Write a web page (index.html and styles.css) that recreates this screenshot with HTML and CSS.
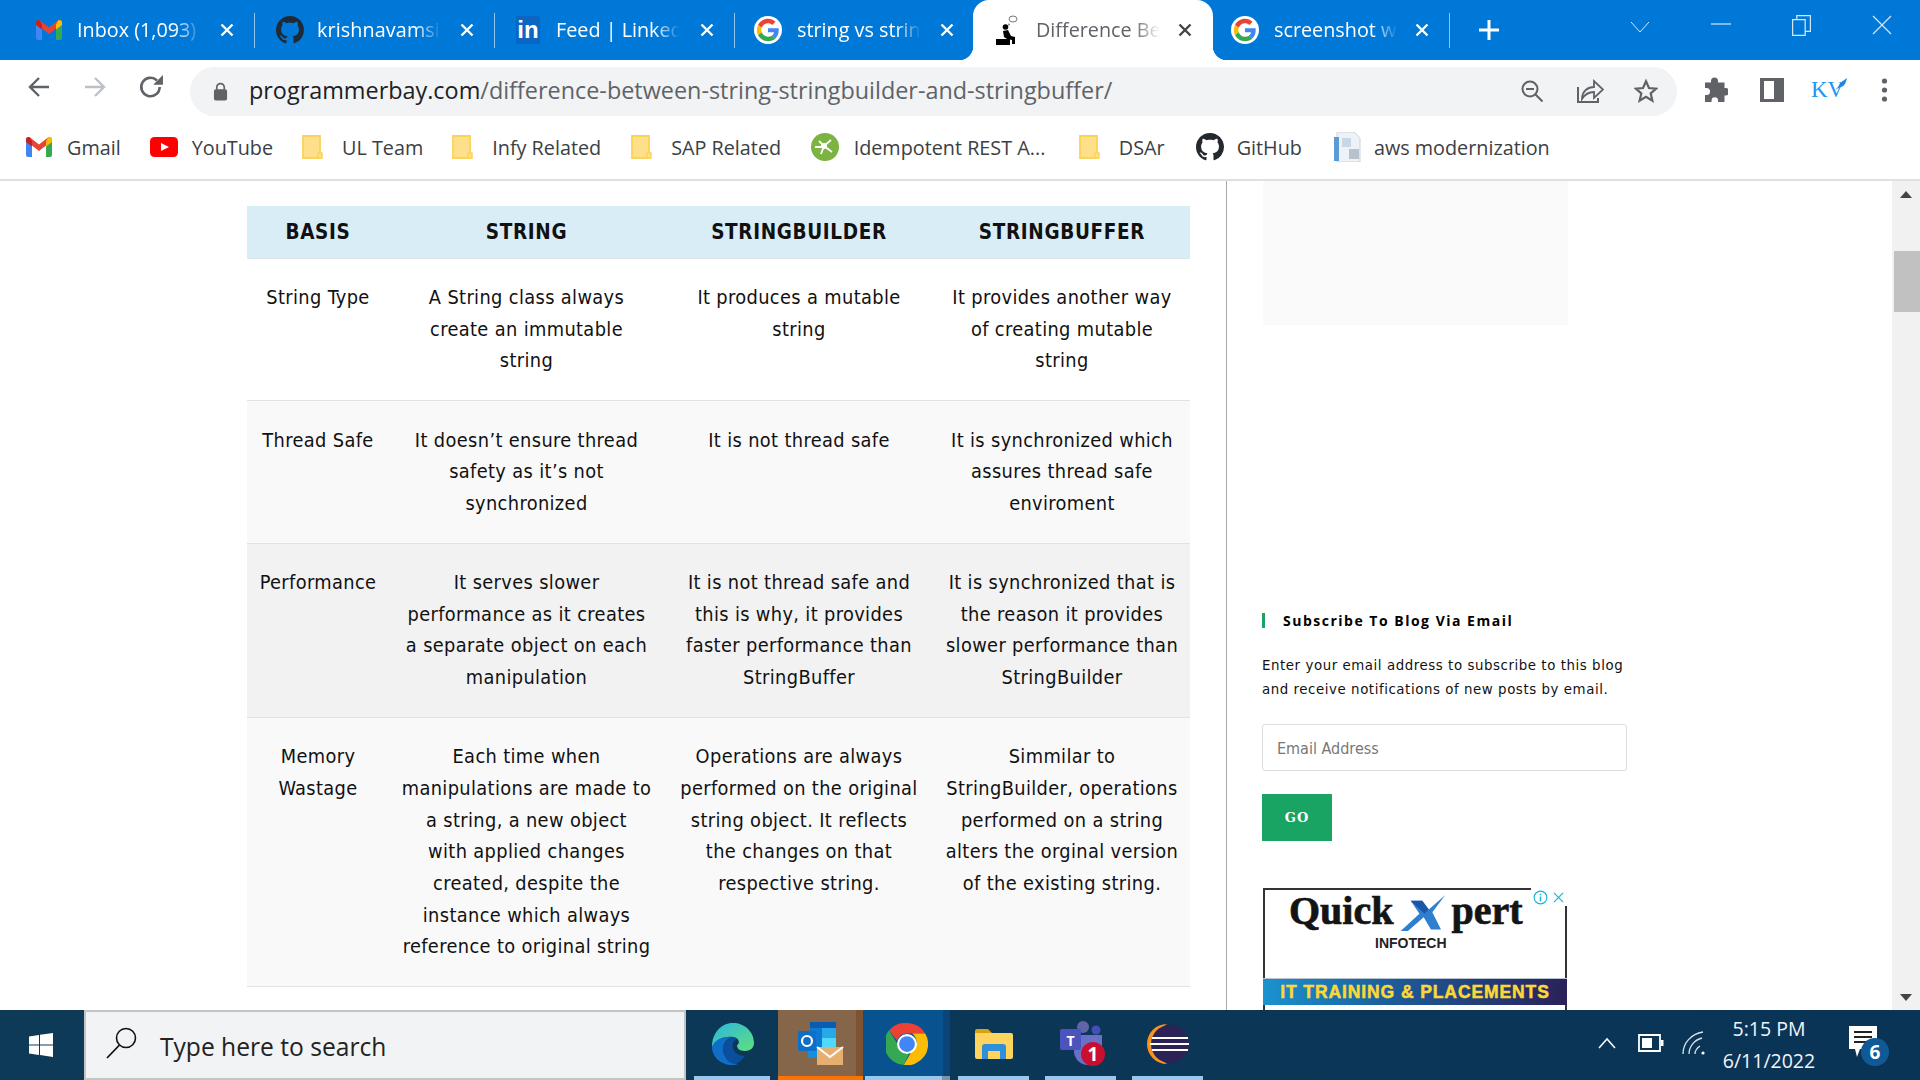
FILE: index.html
```html
<!DOCTYPE html>
<html lang="en">
<head>
<meta charset="utf-8">
<title>Difference Between String, StringBuilder and StringBuffer</title>
<link rel="stylesheet" href="styles.css">
</head>
<body>
<svg class="sprite" xmlns="http://www.w3.org/2000/svg">
  <symbol id="gmail" viewBox="0 0 26 20">
    <path fill="#4285f4" d="M0 3v15a2 2 0 0 0 2 2h4V8z"/>
    <path fill="#34a853" d="M20 8v12h4a2 2 0 0 0 2-2V3z"/>
    <path fill="#ea4335" d="M0 2.500C0 .4 2.400-.7 4 .6l9 7 9-7c1.600-1.300 4-.2 4 1.900V4l-6 4.600-7 5.400-7-5.400L0 4z"/>
    <path fill="#c5221f" d="M0 2.500V5l6 4.600V4.600L4 .6C2.400-.7 0 .4 0 2.500z"/>
    <path fill="#fbbc04" d="M26 2.500V5l-6 4.600V4.600l2-4c1.600-1.300 4-.2 4 1.900z"/>
  </symbol>
  <symbol id="github" viewBox="0 0 16 16">
    <path d="M8 0C3.58 0 0 3.58 0 8c0 3.54 2.29 6.53 5.47 7.59.4.07.55-.17.55-.38 0-.19-.01-.82-.01-1.49-2.01.37-2.53-.49-2.69-.94-.09-.23-.48-.94-.82-1.13-.28-.15-.68-.52-.01-.53.63-.01 1.08.58 1.23.82.72 1.21 1.87.87 2.33.66.07-.52.28-.87.51-1.07-1.78-.2-3.64-.89-3.64-3.95 0-.87.31-1.59.82-2.15-.08-.2-.36-1.02.08-2.12 0 0 .67-.21 2.2.82.64-.18 1.32-.27 2-.27.68 0 1.36.09 2 .27 1.53-1.04 2.2-.82 2.2-.82.44 1.1.16 1.92.08 2.12.51.56.82 1.27.82 2.15 0 3.07-1.87 3.75-3.65 3.95.29.25.54.73.54 1.48 0 1.07-.01 1.93-.01 2.2 0 .21.15.46.55.38A8.013 8.013 0 0 0 16 8c0-4.420-3.58-8-8-8z"/>
  </symbol>
  <symbol id="google" viewBox="-6 -6 60 60">
    <circle cx="24" cy="24" r="30" fill="#fff"/>
    <path fill="#EA4335" d="M24 9.500c3.540 0 6.710 1.220 9.210 3.600l6.850-6.850C35.900 2.380 30.470 0 24 0 14.620 0 6.510 5.380 2.560 13.220l7.980 6.190C12.430 13.720 17.740 9.500 24 9.500z"/>
    <path fill="#4285F4" d="M46.980 24.550c0-1.570-.15-3.090-.38-4.550H24v9.020h12.940c-.58 2.960-2.260 5.480-4.780 7.180l7.730 6c4.510-4.180 7.090-10.360 7.090-17.650z"/>
    <path fill="#FBBC05" d="M10.530 28.590c-.48-1.450-.76-2.990-.76-4.590s.27-3.140.76-4.590l-7.980-6.190C.92 16.460 0 20.120 0 24c0 3.880.92 7.540 2.560 10.780l7.970-6.190z"/>
    <path fill="#34A853" d="M24 48c6.480 0 11.930-2.130 15.890-5.810l-7.730-6c-2.150 1.450-4.920 2.300-8.160 2.300-6.260 0-11.570-4.220-13.470-9.910l-7.980 6.190C6.510 42.620 14.620 48 24 48z"/>
  </symbol>
  <symbol id="close" viewBox="0 0 14 14">
    <path d="M1.500 1.500l11 11M12.500 1.500l-11 11" fill="none" stroke="currentColor" stroke-width="2.400"/>
  </symbol>
  <symbol id="folder" viewBox="0 0 21 24">
    <path fill="#fee08b" stroke="#fbd35a" stroke-width="1.800" d="M1 1h17v22H1z"/>
    <path fill="#fee08b" stroke="#fbd35a" stroke-width="1.500" d="M16 18h4v5h-4z"/>
  </symbol>
</svg>

<header class="tabstrip">
  <div class="tab">
    <svg class="fav fav-gmail"><use href="#gmail"/></svg>
    <span class="tab-title">Inbox (1,093)</span>
    <svg class="tab-x"><use href="#close"/></svg>
  </div>
  <div class="tab tab-two">
    <svg class="fav fav-gh"><use href="#github"/></svg>
    <span class="tab-title">krishnavamsi1</span>
    <svg class="tab-x"><use href="#close"/></svg>
  </div>
  <div class="tab tab-three">
    <span class="fav fav-in">in</span>
    <span class="tab-title">Feed | LinkedI</span>
    <svg class="tab-x"><use href="#close"/></svg>
  </div>
  <div class="tab tab-last">
    <svg class="fav fav-g"><use href="#google"/></svg>
    <span class="tab-title">string vs string</span>
    <svg class="tab-x"><use href="#close"/></svg>
  </div>
  <div class="tab tab-active">
    <svg class="fav fav-person" viewBox="0 0 26 30">
      <ellipse cx="18" cy="4" rx="4" ry="3" fill="#fff" stroke="#777" stroke-width="1"/>
      <circle cx="14" cy="9.500" r=".9" fill="#777"/>
      <circle cx="10.500" cy="12" r="2.800" fill="#000"/>
      <path d="M8 16l5-1 3 6 4 1v7h-3v-4l-5-1-3-2z" fill="#000"/>
      <path d="M1 24h14v6H1z" fill="#000"/>
    </svg>
    <span class="tab-title">Difference Bet</span>
    <svg class="tab-x"><use href="#close"/></svg>
  </div>
  <div class="tab tab-six">
    <svg class="fav fav-g"><use href="#google"/></svg>
    <span class="tab-title">screenshot wi</span>
    <svg class="tab-x"><use href="#close"/></svg>
  </div>
  <svg class="plus" viewBox="0 0 22 22"><path d="M11 1v20M1 11h20" stroke="#fff" stroke-width="3" fill="none"/></svg>
  <div class="win-controls">
    <svg class="win win-chev" viewBox="0 0 20 12"><path d="M1 1l9 10 9-10" fill="none" stroke="#d5e6f7" stroke-width="1"/></svg>
    <svg class="win win-min" viewBox="0 0 20 2"><path d="M0 1h20" stroke="#d5e6f7" stroke-width="1.200"/></svg>
    <svg class="win win-res" viewBox="0 0 18 20"><path d="M.5 4.500h12v15H.5zM4.500 4.500v-4h13v15h-5" fill="none" stroke="#d5e6f7" stroke-width="1.200"/></svg>
    <svg class="win win-cls" viewBox="0 0 20 20"><path d="M1 1l18 18M19 1L1 19" fill="none" stroke="#d5e6f7" stroke-width="1.200"/></svg>
  </div>
</header>

<nav class="toolbar">
  <svg class="tool tool-back" viewBox="0 0 24 24"><path d="M22 12H3M12 3l-9 9 9 9" fill="none" stroke="#5f6368" stroke-width="2.400"/></svg>
  <svg class="tool tool-fwd" viewBox="0 0 24 24"><path d="M2 12h19M12 3l9 9-9 9" fill="none" stroke="#bdc1c6" stroke-width="2.400"/></svg>
  <svg class="tool tool-reload" viewBox="0 0 24 24"><path d="M20 12a8.500 8.500 0 1 1-2.500-6" fill="none" stroke="#5f6368" stroke-width="2.400"/><path d="M23 1v9h-9z" fill="#5f6368"/></svg>
  <div class="omnibox">
    <svg class="lock" viewBox="0 0 16 20"><path d="M4 8V5.500a4 4 0 0 1 8 0V8" fill="none" stroke="#5f6368" stroke-width="1.800"/><rect x="1" y="7.500" width="14" height="12" rx="2" fill="#5f6368"/></svg>
    <div class="url"><span class="url-host">programmerbay.com</span>/difference-between-string-stringbuilder-and-stringbuffer/</div>
    <svg class="omni-ico" viewBox="0 0 24 24"><circle cx="10" cy="10" r="7.500" fill="none" stroke="#5f6368" stroke-width="2"/><path d="M6 10h8M15.500 15.500l7 7" stroke="#5f6368" stroke-width="2" fill="none"/></svg>
    <svg class="omni-ico" viewBox="0 0 28 26"><path d="M2 9v15h20v-4" fill="none" stroke="#5f6368" stroke-width="2"/><path d="M6 21c0-8 6-12 12-12V3l9 8.500-9 8.500v-6c-5 0-9 2-12 7z" fill="none" stroke="#5f6368" stroke-width="1.800"/></svg>
    <svg class="omni-ico" viewBox="0 0 26 26"><path d="M13 2.500l3.200 7.300 7.800.7-5.900 5.200 1.800 7.800-6.900-4.100-6.900 4.100 1.800-7.800L2 10.500l7.800-.7z" fill="none" stroke="#5f6368" stroke-width="2.400"/></svg>
  </div>
  <svg class="tool tool-puzzle" viewBox="0 0 26 26"><path d="M9 4a3.500 3.500 0 0 1 7 0v1.500h6.500V11H24a3.800 3.800 0 0 1 0 7.500h-1.500V25H16v-1.500a3.200 3.200 0 0 0-6.400 0V25H3v-7h1.500a3.500 3.500 0 0 0 0-7H3V5.500h6z" fill="#5f6368"/></svg>
  <svg class="tool tool-side" viewBox="0 0 24 24"><path d="M0 0h24v24H0z" fill="#5f6368"/><path d="M4 3h10v18H4z" fill="#fff"/></svg>
  <div class="kv">KV<svg class="kv-bird" viewBox="0 0 14 14"><path d="M1 13c3-2 4-5 5-7 2-2 5-3 7-5-1 4-2 8-6 9-2 .5-4 2-6 3z" fill="#1e88e5"/></svg></div>
  <svg class="tool tool-dots" viewBox="0 0 6 24"><circle cx="3" cy="3" r="2.600" fill="#5f6368"/><circle cx="3" cy="12" r="2.600" fill="#5f6368"/><circle cx="3" cy="21" r="2.600" fill="#5f6368"/></svg>
</nav>

<nav class="bookmarks">
  <div class="bm bm-gmail"><svg class="bm-ic bm-ic-gmail"><use href="#gmail"/></svg>Gmail</div>
  <div class="bm bm-yt"><svg class="bm-ic bm-ic-yt" viewBox="0 0 28 20"><rect width="28" height="20" rx="4.500" fill="#f00"/><path d="M11 6l8 4-8 4z" fill="#fff"/></svg>YouTube</div>
  <div class="bm bm-ul"><svg class="bm-ic bm-ic-fold"><use href="#folder"/></svg>UL Team</div>
  <div class="bm bm-infy"><svg class="bm-ic bm-ic-fold"><use href="#folder"/></svg>Infy Related</div>
  <div class="bm bm-sap"><svg class="bm-ic bm-ic-fold"><use href="#folder"/></svg>SAP Related</div>
  <div class="bm bm-rest"><svg class="bm-ic bm-ic-rest" viewBox="0 0 28 28"><circle cx="14" cy="14" r="14" fill="#7cb342"/><path d="M8 8l5 5 7-6M13 13l-3 8M13 13l8 6M4 14h9" stroke="#fff" stroke-width="1.800" fill="none"/><circle cx="13" cy="13" r="3" fill="#fff"/></svg>Idempotent REST A...</div>
  <div class="bm bm-dsar"><svg class="bm-ic bm-ic-fold"><use href="#folder"/></svg>DSAr</div>
  <div class="bm bm-gh"><svg class="bm-ic bm-ic-gh"><use href="#github"/></svg>GitHub</div>
  <div class="bm bm-aws"><svg class="bm-ic bm-ic-aws" viewBox="0 0 27 30"><path d="M3 0h17l6 6v24H3z" fill="#eef1f5" stroke="#cdd3da"/><path d="M0 5h5v24H0z" fill="#5b9bd5"/><path d="M8 6h9v9H8z" fill="#c7d6e8"/><path d="M15 17h10v10H15z" fill="#b8c2cc"/></svg>aws modernization</div>
</nav>

<main class="page">
  <article class="article">
    <table class="cmp">
      <colgroup><col class="c1"><col class="c2"><col class="c3"><col class="c4"></colgroup>
      <thead>
        <tr><th>BASIS</th><th>STRING</th><th>STRINGBUILDER</th><th>STRINGBUFFER</th></tr>
      </thead>
      <tbody>
        <tr><td>String Type</td><td>A String class always<br>create an immutable<br>string</td><td>It produces a mutable string</td><td>It provides another way of creating mutable string</td></tr>
        <tr class="r-light"><td>Thread Safe</td><td>It doesn’t ensure thread safety as it’s not synchronized</td><td>It is not thread safe</td><td>It is synchronized which assures thread safe enviroment</td></tr>
        <tr class="r-dark"><td>Performance</td><td>It serves slower performance as it creates a separate object on each manipulation</td><td>It is not thread safe and this is why, it provides faster performance than StringBuffer</td><td>It is synchronized that is the reason it provides slower performance than StringBuilder</td></tr>
        <tr class="r-light"><td>Memory Wastage</td><td>Each time when<br>manipulations are made to<br>a string, a new object<br>with applied changes<br>created, despite the<br>instance which always<br>reference to original string</td><td>Operations are always performed on the original string object. It reflects the changes on that respective string.</td><td>Simmilar to StringBuilder, operations performed on a string alters the orginal version of the existing string.</td></tr>
      </tbody>
    </table>
  </article>
  <aside class="sidebar">
    <div class="ad-blank"></div>
    <h4 class="widget-title">Subscribe To Blog Via Email</h4>
    <p class="widget-text">Enter your email address to subscribe to this blog and receive notifications of new posts by email.</p>
    <div class="email-box">Email Address</div>
    <div class="go-btn">GO</div>
    <div class="ad">
      <div class="ad-logo">
        <span>Quick</span>
        <svg class="ad-x" viewBox="0 0 62 50"><path d="M0 50L26 26 14 8h16l9 12L62 0 44 24l12 24H42L32 31 10 50z" fill="#2f7fd1"/><path d="M14 8h16l9 12-6 6z" fill="#1c56a8"/></svg>
        <span>pert</span>
      </div>
      <div class="ad-sub">INFOTECH</div>
      <div class="ad-banner">IT TRAINING &amp; PLACEMENTS</div>
      <div class="ad-choice">
        <svg class="ad-i" viewBox="0 0 16 16"><circle cx="8" cy="8" r="6.800" fill="none" stroke="#16b5d8" stroke-width="1.200"/><path d="M8 7v5M8 4v1.600" stroke="#16b5d8" stroke-width="1.600"/></svg>
        <svg class="ad-c" viewBox="0 0 12 12"><path d="M1 1l10 10M11 1L1 11" stroke="#16b5d8" stroke-width="1.300"/></svg>
      </div>
    </div>
  </aside>
  <div class="scrollbar">
    <div class="arrow-up"></div>
    <div class="thumb"></div>
    <div class="arrow-down"></div>
  </div>
</main>

<footer class="taskbar">
  <div class="start"><svg class="win-logo" viewBox="0 0 24 24"><path d="M0 3.500l10-1.500v9.400H0zM11 1.800L24 0v11.400H11zM0 12.600h10V22L0 20.500zM11 12.600h13V24l-13-1.900z" fill="#fff"/></svg></div>
  <div class="search">
    <svg class="search-ic" viewBox="0 0 32 32"><circle cx="20" cy="11" r="9.500" fill="none" stroke="#111" stroke-width="1.600"/><path d="M13.500 18L1 31" stroke="#111" stroke-width="1.800"/></svg>
    <span>Type here to search</span>
  </div>
  <div class="tile tile-edge">
    <svg class="tile-ic" viewBox="0 0 42 42">
      <defs><linearGradient id="edgeA" x1="0" y1="0" x2="1" y2="1"><stop offset="0" stop-color="#2bb6e0"/><stop offset="1" stop-color="#5fe07c"/></linearGradient></defs>
      <path d="M21 0C32 0 42 8 42 20c0 5-4 8-9 8-6 0-8-3-8-6 3-1 3-7-4-8C12 13 4 17 0 24 0 10 9 0 21 0z" fill="url(#edgeA)"/>
      <path d="M0 24c2-7 11-11 20-10-6 2-9 7-9 12 0 7 6 14 15 15-2 1-4 1-6 1C9 42 0 34 0 24z" fill="#0f6fc6"/>
      <path d="M11 26c0-5 4-10 9-12 2 0 4 1 4 3-3 1-4 4-3 8 1 5 6 8 12 8-3 4-7 8-11 8-6-1-11-8-11-15z" fill="#0b4f9c"/>
    </svg>
  </div>
  <div class="tile tile-outlook">
    <svg class="tile-ic tile-ic-ol" viewBox="0 0 46 44">
      <path d="M12 0h26v6H12z" fill="#0a5cb0"/><path d="M12 6h12v10H12z" fill="#0f78d4"/><path d="M24 6h14v10H24z" fill="#28a8ea"/><path d="M12 16h12v12H12z" fill="#0f78d4"/><path d="M24 16h14v12H24z" fill="#50d9ff"/><path d="M10 28h30v8H10z" fill="#1490df"/>
      <rect y="9" width="18" height="20" rx="1.500" fill="#0f6fc6"/><circle cx="9" cy="19" r="5" fill="none" stroke="#fff" stroke-width="2.200"/>
      <path d="M19 25h26v18H19z" fill="#e5b06f"/><path d="M19 25l13 10 13-10" fill="none" stroke="#fff" stroke-width="2"/>
    </svg>
  </div>
  <div class="tile tile-chrome">
    <svg class="tile-ic" viewBox="0 0 40 40">
      <path d="M20 0a20 20 0 0 1 17.300 10H20a10 10 0 0 0-9.500 7L3 7A20 20 0 0 1 20 0z" fill="#ea4335"/>
      <path d="M3 7l8 13a9 9 0 0 0 11 9l-5 11A20 20 0 0 1 3 7z" fill="#34a853"/>
      <path d="M37.300 10A20 20 0 0 1 17 40l8-14a10 10 0 0 0 0-16z" fill="#fbbc05"/>
      <circle cx="20" cy="20" r="9.500" fill="#fff"/><circle cx="20" cy="20" r="7.500" fill="#4285f4"/>
    </svg>
  </div>
  <div class="tile tile-files">
    <svg class="tile-ic tile-ic-files" viewBox="0 0 38 32">
      <path d="M0 3a2 2 0 0 1 2-2h11l4 4h-17z" fill="#d9a20c"/><path d="M0 5h36a2 2 0 0 1 2 2v22a2 2 0 0 1-2 2H2a2 2 0 0 1-2-2z" fill="#fcd45f"/>
      <path d="M7 31V19a3 3 0 0 1 3-3h18a3 3 0 0 1 3 3v12h-6v-8H13v8z" fill="#2f8fd8"/>
    </svg>
  </div>
  <div class="tile tile-teams">
    <svg class="tile-ic tile-ic-teams" viewBox="0 0 46 46">
      <circle cx="23" cy="6" r="6" fill="#6264a7"/><circle cx="36" cy="9" r="4.500" fill="#464eb8"/><path d="M14 14h28v16a14 14 0 0 1-28 0z" fill="#6a6fc7"/><rect y="8" width="21" height="21" rx="2" fill="#4b53bc"/>
      <text class="teams-t" x="10.500" y="24.500">T</text>
      <circle cx="33" cy="33" r="12" fill="#c8102e"/><text class="teams-n" x="33" y="40">1</text>
    </svg>
  </div>
  <div class="tile tile-eclipse">
    <svg class="tile-ic" viewBox="0 0 42 40">
      <path d="M20 0A20 20 0 0 0 20 40 24 24 0 0 1 20 0z" fill="#f7941e"/>
      <circle cx="23" cy="20" r="19" fill="#2c2255"/>
      <path d="M5 14h36M3 20h39M5 26h36" stroke="#fff" stroke-width="2"/>
    </svg>
  </div>
  <div class="tray">
    <svg class="tray-caret" viewBox="0 0 18 12"><path d="M1 11l8-9 8 9" fill="none" stroke="#fff" stroke-width="1.500"/></svg>
    <svg class="tray-bat" viewBox="0 0 26 18"><path d="M1 1h21v16H1z" fill="none" stroke="#fff" stroke-width="1.800"/><path d="M4 4h10v10H4z" fill="#fff"/><path d="M23 6h2.500v6H23z" fill="#fff"/></svg>
    <svg class="tray-wifi" viewBox="0 0 24 24"><path d="M1 23C1 12 9 3 21 1M7 23C7 16 12 9 20 7M13 23c0-3 2-6 5-8" fill="none" stroke="#d9e3ec" stroke-width="1.300"/><circle cx="21" cy="22" r="1.600" fill="#fff"/></svg>
    <div class="clock"><div>5:15 PM</div><div>6/11/2022</div></div>
    <div class="notif">
      <svg class="notif-ic" viewBox="0 0 28 32"><path d="M0 0h28v23H11l-3 8-2-8H0z" fill="#fff"/><path d="M5 6h18M5 11h18M5 16h14" stroke="#222" stroke-width="1.800"/></svg>
      <span class="notif-badge">6</span>
    </div>
  </div>
</footer>
</body>
</html>
```

FILE: styles.css
```css
* { box-sizing: border-box; }
html, body { margin: 0; height: 100%; }
body {
  width: 1920px;
  height: 1080px;
  overflow: hidden;
  display: flex;
  flex-direction: column;
  background: #fff;
  font-family: "Open Sans", "Noto Sans", sans-serif;
}
.sprite { display: none; }

/* tab strip */
.tabstrip {
  height: 60px;
  flex: none;
  display: flex;
  align-items: stretch;
  background: #0078d7;
  padding-left: 15px;
  color: #fff;
}
.tab {
  width: 240px;
  flex: none;
  display: flex;
  align-items: center;
  padding: 0 21px 0 21px;
  position: relative;
}
.tab::after {
  content: "";
  position: absolute;
  right: 0;
  top: 13px;
  bottom: 12px;
  width: 1px;
  background: #8fc4ec;
}
.tab-last::after { display: none; }
.tab-last { padding-left: 19px; }
.fav { width: 28px; height: 28px; flex: none; }
.fav-gmail { width: 26px; height: 20px; }
.fav-gh { fill: #1f2a36; }
.fav-in {
  width: 24px;
  height: 28px;
  background: #0a66c2;
  color: #fff;
  font: bold 24px/27px "Liberation Sans", sans-serif;
  text-align: center;
}
.tab-title {
  margin-left: 15px;
  width: 140px;
  flex: none;
  white-space: nowrap;
  font-size: 19.800px;
  line-height: 28px;
  -webkit-mask-image: linear-gradient(to right, #000 98px, transparent 124px);
  mask-image: linear-gradient(to right, #000 98px, transparent 124px);
}
.tab-two .tab-title { margin-left: 13px; letter-spacing: .1px; }
.tab-three .tab-title { margin-left: 16px; }
.tab-x { width: 14px; height: 14px; margin-left: auto; color: #fff; flex: none; }
.tab-active {
  width: 240px;
  margin-left: -2px;
  background: #fff;
  color: #5f6368;
  border-radius: 16px 16px 0 0;
  padding-left: 22px;
}
.tab-active::after { display: none; }
.tab-active::before {
  content: "";
  position: absolute;
  left: -14px;
  right: -14px;
  bottom: 0;
  height: 14px;
  background:
    radial-gradient(circle at 0 0, #0078d7 14px, #fff 14.500px) left / 14px 14px no-repeat,
    radial-gradient(circle at 100% 0, #0078d7 14px, #fff 14.500px) right / 14px 14px no-repeat;
}
.fav-person { width: 26px; height: 30px; }
.tab-active .tab-x { color: #444; }
.tab-active .tab-title { margin-left: 15px; }
.tab-six { width: 237px; padding-left: 18px; }
.tab-six .tab-title { margin-left: 15px; }
.plus { width: 22px; height: 22px; margin: auto 0 auto 28px; flex: none; }
.win-controls { flex: 1; display: flex; align-items: center; position: relative; }
.win { flex: none; }
.win-chev { width: 20px; height: 12px; margin: -6px 0 0 130px; }
.win-min { width: 20px; height: 2px; margin: -12px 0 0 61px; }
.win-res { width: 19px; height: 21px; margin: -10px 0 0 61px; }
.win-cls { width: 20px; height: 20px; margin: -10px 0 0 61px; }

/* toolbar */
.toolbar {
  height: 60px;
  flex: none;
  display: flex;
  align-items: center;
  background: #fff;
  padding-left: 27px;
}
.tool { flex: none; }
.tool-back { width: 24px; height: 24px; margin-top: -6px; }
.tool-fwd { width: 24px; height: 24px; margin: -6px 0 0 32px; }
.tool-reload { width: 26px; height: 26px; margin: -6px 0 0 31px; }
.omnibox {
  width: 1487px;
  height: 49px;
  margin: 2px 0 0 26px;
  flex: none;
  background: #f1f3f4;
  border-radius: 25px;
  display: flex;
  align-items: center;
  padding-left: 23px;
}
.lock { width: 15px; height: 19px; flex: none; }
.url {
  margin-left: 21px;
  flex: 1;
  white-space: nowrap;
  font-size: 23.400px;
  line-height: 30px;
  padding-bottom: 2px;
  color: #5f6368;
}
.url-host { color: #202124; }
.omni-ico { width: 24px; height: 24px; flex: none; margin-right: 32px; }
.omni-ico:nth-last-child(2) { width: 28px; height: 26px; margin-right: 30px; }
.omni-ico:last-child { margin-right: 19px; }
.tool-puzzle { width: 26px; height: 26px; margin: 0 0 0 25px; }
.tool-side { width: 24px; height: 24px; margin: 0 0 0 32px; }
.kv {
  position: relative;
  margin-left: 27px;
  width: 34px;
  flex: none;
  color: #2196f3;
  font: 23px/26px "Liberation Serif", serif;
}
.kv-bird { position: absolute; right: -3px; top: 0; width: 14px; height: 14px; }
.tool-dots { width: 7px; height: 24px; margin-left: 36px; }

/* bookmarks */
.bookmarks {
  height: 61px;
  flex: none;
  display: flex;
  align-items: center;
  border-bottom: 2px solid #e0e0e0;
  padding: 0 0 5px 26px;
  color: #3c4043;
  font-size: 19.800px;
  white-space: nowrap;
}
.bm { display: flex; align-items: center; flex: none; }
.bm-ic { flex: none; }
.bm-ic-gmail { width: 26px; height: 20px; margin-right: 15px; }
.bm-ic-yt { width: 28px; height: 20px; margin-right: 14px; }
.bm-ic-fold { width: 21px; height: 24px; margin-right: 19px; }
.bm-ic-rest { width: 28px; height: 28px; margin-right: 15px; }
.bm-ic-gh { width: 28px; height: 28px; margin-right: 13px; fill: #24292f; }
.bm-ic-aws { width: 27px; height: 30px; margin-right: 13px; }
.bm-yt { margin-left: 29px; }
.bm-ul { margin-left: 29px; }
.bm-infy { margin-left: 29px; }
.bm-sap { margin-left: 30px; }
.bm-rest { margin-left: 29.500px; }
.bm-dsar { margin-left: 33.500px; }
.bm-gh { margin-left: 31px; }
.bm-aws { margin-left: 32px; }

/* page */
.page {
  flex: 1;
  min-height: 0;
  display: flex;
  overflow: hidden;
  background: #fff;
}
.article {
  width: 1227px;
  flex: none;
  border-right: 1px solid #aaa;
  padding: 25px 0 0 247px;
}
.cmp {
  width: 943px;
  table-layout: fixed;
  border-collapse: collapse;
  font-family: "DejaVu Sans", sans-serif;
  font-stretch: condensed;
  font-size: 19.800px;
  letter-spacing: .37px;
  line-height: 31.680px;
  color: #111;
  text-align: center;
}
.c1 { width: 142px; }
.c2 { width: 275px; }
.c3 { width: 270px; }
.c4 { width: 256px; }
.cmp th {
  padding: 11px 4px 9px;
  background: #d9edf7;
  border-bottom: 1px solid #dfe4e7;
  font-weight: bold;
  font-size: 20.500px;
  letter-spacing: .65px;
}
.cmp td {
  padding: 23.250px 10px;
  vertical-align: top;
  border-bottom: 1px solid #e2e2e2;
}
.r-light td { background: #f9f9f9; }
.r-dark td { background: #f2f2f2; }
.sidebar {
  width: 665px;
  flex: none;
  padding-left: 35px;
  color: #111;
}
.ad-blank { width: 305px; height: 144px; background: #fafafa; margin-left: 1px; }
.widget-title {
  margin: 288px 0 0;
  height: 15px;
  border-left: 3px solid #19a463;
  padding-left: 18px;
  font: bold 14px/15px "Open Sans", sans-serif;
  letter-spacing: 1.500px;
  color: #000;
}
.widget-text {
  margin: 25px 0 0;
  width: 368px;
  font-family: "DejaVu Sans", sans-serif;
  font-stretch: condensed;
  font-size: 14.850px;
  line-height: 24px;
  letter-spacing: .56px;
}
.email-box {
  margin-top: 23px;
  width: 365px;
  height: 47px;
  border: 1px solid #ddd;
  border-radius: 3px;
  padding-left: 14px;
  font-family: "DejaVu Sans", sans-serif;
  font-stretch: condensed;
  font-size: 16px;
  line-height: 47px;
  color: #777;
}
.go-btn {
  margin-top: 23px;
  width: 70px;
  height: 47px;
  background: #19a463;
  color: #fff;
  font: bold 13px/47px "DejaVu Serif", serif;
  letter-spacing: 1px;
  text-align: center;
}
.ad {
  position: relative;
  margin: 47px 0 0 1px;
  width: 304px;
  height: 122px;
  background: #fff;
  border: solid #333;
  border-width: 2px 2px 0;
}
.ad-logo {
  height: 50px;
  padding: 0 0 0 24px;
  display: flex;
  align-items: flex-start;
  font: bold 40px/42px "Liberation Serif", serif;
  color: #141414;
  -webkit-text-stroke: .7px #141414;
}
.ad-x { width: 62px; height: 36px; margin: 5px -3px 0 -1px; flex: none; }
.ad-sub {
  margin-top: -6px;
  padding-left: 110px;
  font: bold 14px/18px "Liberation Sans", sans-serif;
  color: #222;
}
.ad-banner {
  margin: 26px -2px 0;
  height: 27px;
  background: linear-gradient(to right, #1a93cf 0%, #1b5f9d 40%, #2a2158 100%);
  border-top: 1px solid #b9c2d0;
  color: #fdd835;
  font: 900 17.500px/26px "Liberation Sans", sans-serif;
  letter-spacing: .9px;
  text-align: center;
  -webkit-text-stroke: .5px #fdd835;
}
.ad-choice {
  position: absolute;
  top: -2px;
  right: -2px;
  width: 36px;
  height: 18px;
  background: #fff;
  display: flex;
  align-items: center;
  justify-content: space-between;
  padding: 0 3px 0 2px;
}
.ad-i { width: 15px; height: 15px; }
.ad-c { width: 11px; height: 11px; }
.scrollbar {
  width: 28px;
  margin-left: auto;
  flex: none;
  background: #f1f1f1;
  position: relative;
}
.thumb {
  position: absolute;
  top: 70px;
  left: 2px;
  right: 0;
  height: 61px;
  background: #c1c1c1;
}
.arrow-up, .arrow-down {
  position: absolute;
  left: 8px;
  width: 0;
  height: 0;
  border-left: 6px solid transparent;
  border-right: 6px solid transparent;
}
.arrow-up { top: 10px; border-bottom: 7px solid #444; }
.arrow-down { bottom: 9px; border-top: 7px solid #444; }

/* taskbar */
.taskbar {
  height: 70px;
  flex: none;
  display: flex;
  align-items: stretch;
  background: linear-gradient(to right, #0d3a57, #0a3456);
  color: #fff;
}
.start { width: 84px; flex: none; display: flex; align-items: center; justify-content: center; }
.win-logo { width: 24px; height: 24px; margin-left: -2px; }
.search {
  width: 602px;
  flex: none;
  background: #f2f3f5;
  border: 2px solid #c4c4c4;
  display: flex;
  align-items: center;
  padding-left: 20px;
  color: #222;
  font-size: 24.600px;
}
.search-ic { width: 32px; height: 32px; margin: -5px 23px 0 0; flex: none; }
.search span { margin: 3px 0 0 -1px; }
.tile {
  flex: none;
  display: flex;
  align-items: center;
  justify-content: center;
  padding-bottom: 3px;
  position: relative;
}
.tile::after {
  content: "";
  position: absolute;
  bottom: 0;
  height: 4px;
  left: 8px;
  right: 8px;
  background: #99c8ee;
}
.tile-ic { width: 42px; height: 42px; }
.tile-edge { width: 92px; padding-left: 2px; }
.tile-outlook {
  width: 85px;
  background: linear-gradient(to right, #85664a 92%, #7f5232 92%);
}
.tile-outlook::after { left: 0; right: 0; background: #f97400; }
.tile-ic-ol { width: 46px; height: 44px; }
.tile-chrome {
  width: 87px;
  background: linear-gradient(to right, #07528f 92%, #0a4478 92%);
}
.tile-chrome::after { left: 2px; right: 0; background: linear-gradient(to right, #99c8ee 91%, #7d94a8 91%); }
.tile-files { width: 87px; }
.tile-teams { width: 87px; padding-left: 4px; }
.tile-eclipse { width: 87px; }
.tile-ic-files { width: 38px; height: 32px; }
.tile-ic-teams { width: 46px; height: 46px; }
.teams-t { font: bold 14px "Open Sans", sans-serif; fill: #fff; text-anchor: middle; }
.teams-n { font: bold 19px "Open Sans", sans-serif; fill: #fff; text-anchor: middle; }
.tray { flex: 1; display: flex; align-items: center; padding-left: 387px; }
.tray-caret { width: 18px; height: 12px; flex: none; margin-top: -4px; }
.tray-bat { width: 26px; height: 18px; flex: none; margin: -4px 0 0 22px; }
.tray-wifi { width: 24px; height: 24px; flex: none; margin: -4px 0 0 18px; }
.clock {
  width: 126px;
  text-align: center;
  font-size: 19.500px;
  line-height: 32px;
  flex: none;
  color: #f2f5f8;
}
.notif { position: relative; width: 40px; height: 50px; margin-left: 17px; flex: none; }
.notif-ic { position: absolute; left: 0; top: 6px; width: 28px; height: 32px; }
.notif-badge {
  position: absolute;
  left: 12px;
  top: 18px;
  width: 28px;
  height: 28px;
  border-radius: 50%;
  background: #0f5a96;
  text-align: center;
  font: bold 19px/28px "Open Sans", sans-serif;
  color: #fff;
}
```
